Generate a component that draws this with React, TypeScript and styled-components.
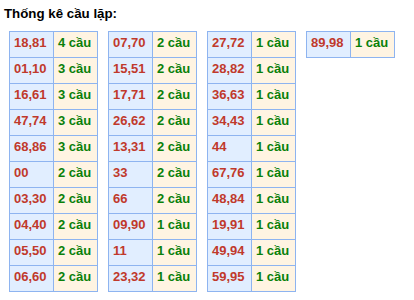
import React from 'react';
import styled, { createGlobalStyle } from 'styled-components';

type Row = [string, number];

const groups: Row[][] = [
  [
    ['18,81', 4], ['01,10', 3], ['16,61', 3], ['47,74', 3], ['68,86', 3],
    ['00', 2], ['03,30', 2], ['04,40', 2], ['05,50', 2], ['06,60', 2],
  ],
  [
    ['07,70', 2], ['15,51', 2], ['17,71', 2], ['26,62', 2], ['13,31', 2],
    ['33', 2], ['66', 2], ['09,90', 1], ['11', 1], ['23,32', 1],
  ],
  [
    ['27,72', 1], ['28,82', 1], ['36,63', 1], ['34,43', 1], ['44', 1],
    ['67,76', 1], ['48,84', 1], ['19,91', 1], ['49,94', 1], ['59,95', 1],
  ],
  [['89,98', 1]],
];

const GlobalStyle = createGlobalStyle`
  body {
    margin: 0;
    background: #fff;
    font-family: "Liberation Sans", Arial, sans-serif;
  }
`;

const Wrap = styled.div`
  padding: 6px 4px 0;
`;

const Title = styled.div`
  font-size: 13.3px;
  font-weight: bold;
  line-height: 15px;
  color: #000;
  margin-bottom: 10px;
`;

const Tables = styled.div`
  display: flex;
  align-items: flex-start;
  gap: 10px;
  padding-left: 5px;
`;

const Table = styled.table`
  border-collapse: collapse;
  width: 89px;
  table-layout: fixed;
`;

const Cell = styled.td<{ $kind: 'num' | 'count' }>`
  border: 1px solid #8eb4f0;
  height: 15px;
  padding: 3px 4px 7px;
  line-height: 15px;
  font-size: 13px;
  font-weight: bold;
  white-space: nowrap;
  text-align: left;
  background: ${(p) => (p.$kind === 'num' ? '#e1eeff' : '#fff4e2')};
  color: ${(p) => (p.$kind === 'num' ? '#c0392b' : '#0a800a')};
`;

export default function App() {
  return (
    <>
      <GlobalStyle />
      <Wrap>
        <Title>Thống kê cầu lặp:</Title>
        <Tables>
          {groups.map((rows, i) => (
            <Table key={i}>
              <tbody>
                {rows.map(([pair, n]) => (
                  <tr key={pair}>
                    <Cell $kind="num">{pair}</Cell>
                    <Cell $kind="count">{n} cầu</Cell>
                  </tr>
                ))}
              </tbody>
            </Table>
          ))}
        </Tables>
      </Wrap>
    </>
  );
}
